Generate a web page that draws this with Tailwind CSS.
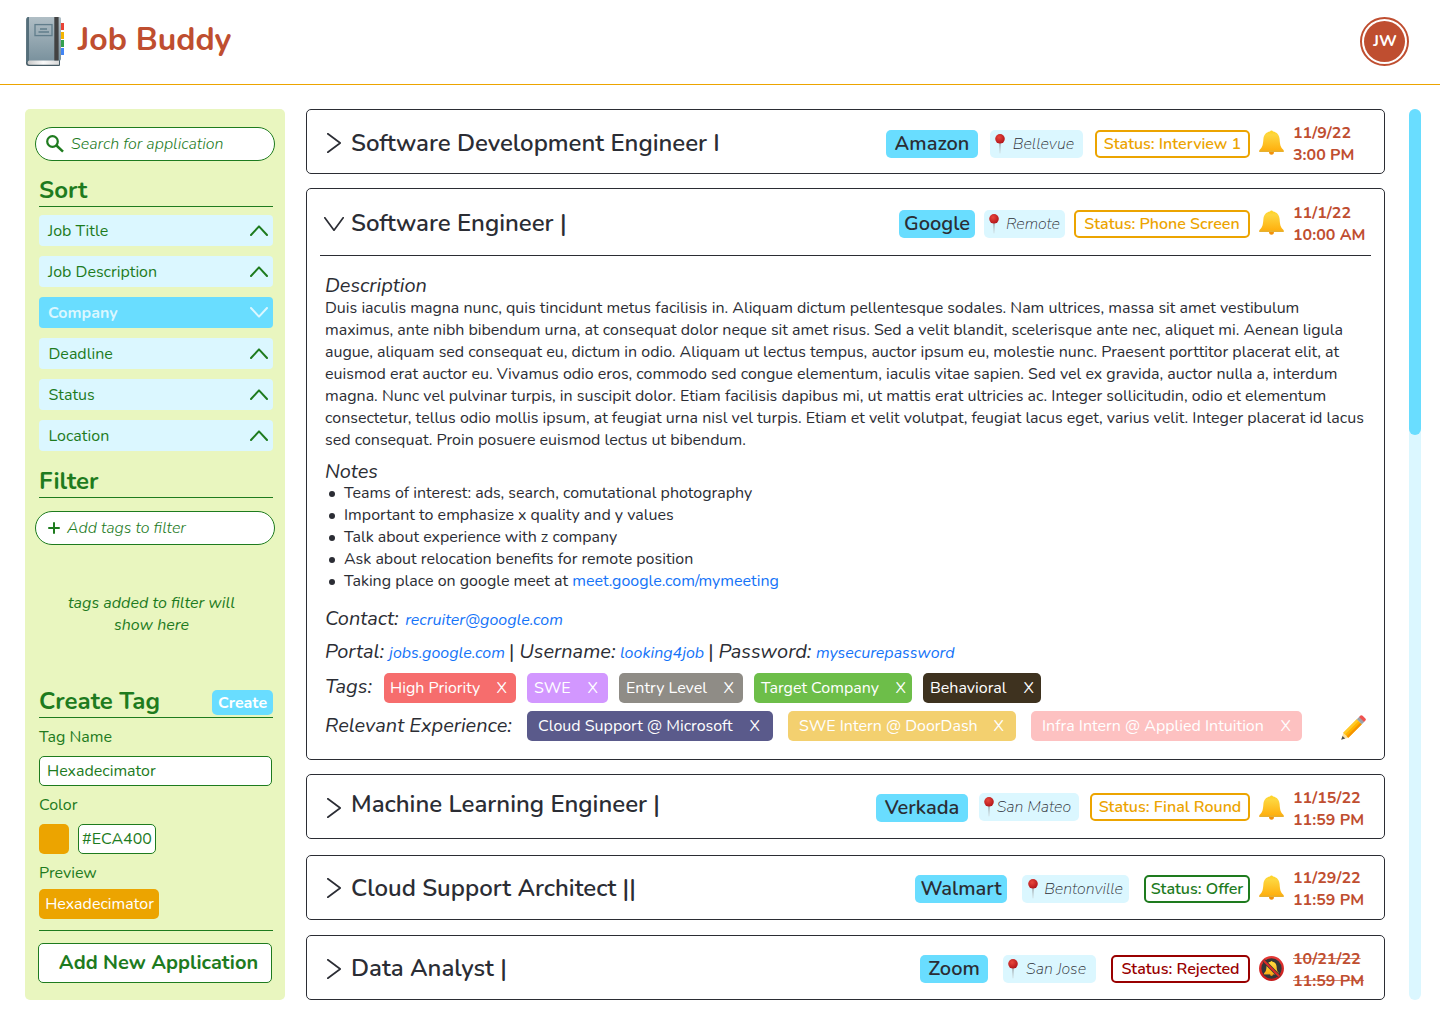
<!DOCTYPE html>
<html lang="en">
<head>
<meta charset="utf-8">
<title>Job Buddy</title>
<script src="https://cdn.jsdelivr.net/npm/@tailwindcss/browser@4"></script>
</head>
<body class="w-[1440px] h-[1024px] overflow-hidden bg-white font-['Nunito','Lato',sans-serif] text-base leading-[22px] text-[#2b2d34]">

<svg class="absolute size-0">
  <symbol id="right" viewBox="0 0 14 20"><path d="M0.8 0.8 L13.2 10 L0.8 19.2" fill="none" stroke="#2b2d34" stroke-width="1.7" stroke-linecap="round" stroke-linejoin="round"/></symbol>
  <symbol id="up" viewBox="0 0 18 11"><path d="M1 10 L9 1.4 L17 10" fill="none" stroke="currentColor" stroke-width="2" stroke-linecap="round" stroke-linejoin="round"/></symbol>
  <linearGradient id="cover" x1="0" y1="0" x2="0" y2="1"><stop offset="0" stop-color="#b0bec5"/><stop offset="1" stop-color="#78909c"/></linearGradient>
  <linearGradient id="pages" x1="0" y1="0" x2="1" y2="0"><stop offset="0" stop-color="#c9c9c9"/><stop offset=".5" stop-color="#fafafa"/><stop offset="1" stop-color="#d8d8d8"/></linearGradient>
  <linearGradient id="gold" x1="0" y1="0" x2="0" y2="1"><stop offset="0" stop-color="#ffd21f"/><stop offset=".2" stop-color="#fdd63f"/><stop offset="1" stop-color="#ffac0a"/></linearGradient>
  <radialGradient id="ball" cx=".4" cy=".35" r=".65"><stop offset="0" stop-color="#e8463c"/><stop offset="1" stop-color="#b3161b"/></radialGradient>
  <linearGradient id="needle" x1="0" y1="0" x2="0" y2="1"><stop offset="0" stop-color="#8a9499"/><stop offset="1" stop-color="#cdd8dc"/></linearGradient>
  <linearGradient id="ring" x1="0" y1="0" x2="0" y2="1"><stop offset="0" stop-color="#e53935"/><stop offset="1" stop-color="#c61a1a"/></linearGradient>
  <symbol id="bell" viewBox="0 0 25 25">
    <path d="M10 21.500 H15 a2.500 3.200 0 0 1 -5 0z" fill="#f29008"/>
    <path d="M11 1.600 a1.600 1.500 0 0 1 3 0 C18 2.300 20.300 5 20.600 9 C21 14.500 21.300 17 24.300 19.800 Q25.200 21.800 24 21.900 H1 Q-0.200 21.800 0.700 19.800 C3.700 17 4 14.500 4.400 9 C4.700 5 7 2.300 11 1.600z" fill="url(#gold)"/>
    <path d="M0.500 20.600 H24.500 Q25 21.900 24 22 H1 Q0 21.900 0.500 20.600z" fill="#e6b030"/>
  </symbol>
  <symbol id="muted" viewBox="0 0 25 25">
    <circle cx="12.500" cy="12.500" r="11.300" fill="#343638" stroke="url(#ring)" stroke-width="2.300"/>
    <svg x="4.800" y="4.200" width="15.500" height="16.500"><use href="#bell"/></svg>
    <path d="M4.600 4.600 L20.400 20.400" stroke="#343638" stroke-width="3.600"/>
    <path d="M4.600 4.600 L20.400 20.400" stroke="#dd2c28" stroke-width="2.100"/>
  </symbol>
  <symbol id="pin" viewBox="0 0 10 20">
    <path d="M4.300 8.500 H5.700 L5.300 19 Q5 20 4.700 19z" fill="url(#needle)"/>
    <circle cx="5" cy="4.800" r="4.800" fill="url(#ball)"/>
  </symbol>
</svg>

<header class="flex h-[85px] items-start border-b border-[#eca400] pl-[26px] pr-[31px] pt-[17px]">
  <svg class="h-[49px] w-[38px]" viewBox="0 0 38 49">
    <rect x="33" y="6" width="5" height="7" fill="#ea4335"/>
    <rect x="33" y="15" width="5" height="7" fill="#f4b400"/>
    <rect x="33" y="23" width="5" height="7" fill="#34a04e"/>
    <rect x="33" y="31" width="5" height="7" fill="#4285f4"/>
    <path d="M2 42 H34 V48 a1 1 0 0 1 -1 1 H3 a3 3 0 0 1 -3 -3 V3 a3 3 0 0 1 2 -2.5z" fill="#455a64"/>
    <path d="M2.500 43 H33 V47.700 H3.500 a2 2 0 0 1 -2 -2z" fill="url(#pages)"/>
    <path d="M2.500 0 H33.500 a1.500 1.500 0 0 1 1.500 1.500 V42 a1.500 1.500 0 0 1 -1.500 1.500 H3 Q1.500 43.500 0.500 45.500 V2 a2 2 0 0 1 2 -2z" fill="url(#cover)"/>
    <path d="M0.500 2 a2 2 0 0 1 2.500 -2 V43.500 Q1.500 43.500 0.500 45.500z" fill="#546e7a"/>
    <rect x="28.300" y="0" width="4.300" height="43.500" fill="#424242"/>
    <rect x="9" y="7.600" width="17" height="11" fill="none" stroke="#607d8b" stroke-width="1.300"/>
    <path d="M14 12 H21 M12.500 15 H23" stroke="#607d8b" stroke-width="1.300"/>
  </svg>
  <h1 class="ml-[14px] mt-px text-[32px] font-bold leading-[44px] text-[#bf4e30]">Job Buddy</h1>
  <div class="ml-auto flex size-[49px] items-center justify-center rounded-full border-2 border-[#bf4e30]">
    <div class="flex size-[41px] items-center justify-center rounded-full bg-[#bf4e30] pb-px pl-px font-bold text-white">JW</div>
  </div>
</header>

<main class="flex pl-[25px] pt-6">
  <aside class="flex h-[891px] w-[260px] shrink-0 flex-col rounded-[5px] bg-[#e9f6bf] pl-[14px] pr-3 pt-[18px] text-[#1e7b1e]">
    <label class="-ml-1 -mr-[2px] flex h-[34px] w-[240px] items-center rounded-full border border-[#1e7b1e] bg-white pl-[10px]">
      <svg class="size-[18px]" viewBox="0 0 18 18" fill="none" stroke="#1e7b1e"><circle cx="6.500" cy="6.500" r="5.300" stroke-width="2.200"/><path d="M10.500 10.500 L17 16.600" stroke-width="2.500"/></svg>
      <span class="ml-[7px] font-light italic">Search for application</span>
    </label>

    <h2 class="mt-3 h-[34px] w-[234px] border-b border-[#1e7b1e] text-2xl font-bold leading-[35px]">Sort</h2>
    <ul class="mt-2 flex w-[234px] flex-col gap-[10px]">
      <li class="flex h-[31px] items-center justify-between rounded-[4px] bg-[#dbf7ff] pl-[9px] pr-[5px]">Job Title<svg class="h-[11px] w-[18px]"><use href="#up"/></svg></li>
      <li class="flex h-[31px] items-center justify-between rounded-[4px] bg-[#dbf7ff] pl-[9px] pr-[5px]">Job Description<svg class="h-[11px] w-[18px]"><use href="#up"/></svg></li>
      <li class="flex h-[31px] items-center justify-between rounded-[4px] bg-[#69ddff] pl-[9px] pr-[5px] font-bold text-[#dbf7ff]">Company<svg class="h-[11px] w-[18px] rotate-180"><use href="#up"/></svg></li>
      <li class="flex h-[31px] items-center justify-between rounded-[4px] bg-[#dbf7ff] pl-[9.500px] pr-[5px]">Deadline<svg class="h-[11px] w-[18px]"><use href="#up"/></svg></li>
      <li class="flex h-[31px] items-center justify-between rounded-[4px] bg-[#dbf7ff] pl-[9.500px] pr-[5px]">Status<svg class="h-[11px] w-[18px]"><use href="#up"/></svg></li>
      <li class="flex h-[31px] items-center justify-between rounded-[4px] bg-[#dbf7ff] pl-[9.500px] pr-[5px]">Location<svg class="h-[11px] w-[18px]"><use href="#up"/></svg></li>
    </ul>

    <h2 class="mt-[13px] h-[34px] w-[234px] border-b border-[#1e7b1e] text-2xl font-bold leading-[35px]">Filter</h2>
    <label class="-ml-1 mt-[13px] flex h-[34px] w-[240px] items-center rounded-full border border-[#1e7b1e] bg-white pl-3">
      <svg class="size-3" viewBox="0 0 12 12" stroke="#1e7b1e" stroke-width="2" stroke-linecap="round"><path d="M6 1V11M1 6H11"/></svg>
      <span class="ml-[7px] font-light italic">Add tags to filter</span>
    </label>
    <p class="ml-[-9px] mt-[47px] w-[243px] text-center italic">tags added to filter will<br>show here</p>

    <div class="mt-12 flex h-[34px] w-[234px] items-start justify-between border-b border-[#1e7b1e]">
      <h2 class="text-2xl font-bold leading-[35px]">Create Tag</h2>
      <button class="mt-[6px] h-[25px] w-[61px] rounded-[5px] bg-[#69ddff] font-bold text-white">Create</button>
    </div>
    <span class="mt-2">Tag Name</span>
    <div class="mt-2 h-[30px] w-[233px] rounded-[5px] border border-[#1e7b1e] bg-white pl-[7px] pt-[3px]">Hexadecimator</div>
    <span class="mt-2">Color</span>
    <div class="mt-2 flex gap-[9px]">
      <div class="size-[30px] rounded-[5px] bg-[#eca400]"></div>
      <div class="h-[30px] w-[78px] rounded-[5px] border border-[#1e7b1e] bg-white pt-[3px] text-center">#ECA400</div>
    </div>
    <span class="mt-2">Preview</span>
    <div class="mt-[5px] flex h-[30px] w-[120px] items-center justify-center rounded-[5px] bg-[#eca400] pl-px text-white">Hexadecimator</div>
    <hr class="mt-[11px] w-[234px] border-[#1e7b1e]">
    <button class="-ml-px mt-3 h-10 w-[234px] rounded-[5px] border border-[#1e7b1e] bg-white pb-[2px] pl-[7px] text-xl font-bold leading-[27px]">Add New Application</button>
  </aside>

  <section class="ml-[21px] flex w-[1079px] flex-col">
    <article class="flex h-[65px] items-start rounded-[5px] border border-[#2b2d34] pl-5">
      <svg class="mt-[23px] h-5 w-[14px]"><use href="#right"/></svg>
      <h3 class="ml-[10px] mt-[17px] text-2xl font-semibold leading-[33px]">Software Development Engineer I</h3>
      <div class="ml-auto mt-5 flex">
        <span class="flex h-7 w-[92px] items-center justify-center rounded-[5px] bg-[#69ddff] text-xl font-semibold">Amazon</span>
        <span class="ml-3 flex h-7 w-[93px] items-center rounded-[5px] bg-[#dbf7ff] pl-[5px] pr-[9px] font-extralight italic"><svg class="-mt-px h-5 w-[10px]"><use href="#pin"/></svg><span class="ml-auto">Bellevue</span></span>
        <span class="ml-3 flex h-7 w-[155px] items-center justify-center rounded-[5px] border-2 border-[#eca400] font-semibold text-[#eca400]">Status: Interview 1</span>
      </div>
      <svg class="ml-[9px] mt-[20px] size-[25px]"><use href="#bell"/></svg>
      <time class="ml-[9px] mt-3 w-[91px] font-bold text-[#bf4e30]">11/9/22<br>3:00 PM</time>
    </article>

    <article class="mt-[14px] flex h-[572px] flex-col rounded-[5px] border border-[#2b2d34]">
      <div class="flex h-[66px] items-start pl-[17px]">
        <svg class="mt-7 h-[14px] w-5" viewBox="0 0 20 14"><path d="M0.800 0.800 L10 13.200 L19.200 0.800" fill="none" stroke="#2b2d34" stroke-width="1.700" stroke-linecap="round" stroke-linejoin="round"/></svg>
        <h3 class="ml-[7px] mt-[18px] text-2xl font-semibold leading-[33px]">Software Engineer |</h3>
        <div class="ml-auto mt-[21px] flex">
          <span class="flex h-7 w-[76px] items-center justify-center rounded-[5px] bg-[#69ddff] text-xl font-semibold">Google</span>
          <span class="ml-[9px] flex h-7 w-[81px] items-center rounded-[5px] bg-[#dbf7ff] pl-[5px] pr-[5px] font-extralight italic"><svg class="-mt-px h-5 w-[10px]"><use href="#pin"/></svg><span class="ml-auto">Remote</span></span>
          <span class="ml-[9px] flex h-7 w-[176px] items-center justify-center rounded-[5px] border-2 border-[#eca400] font-semibold text-[#eca400]">Status: Phone Screen</span>
        </div>
        <svg class="ml-[9px] mt-[21px] size-[25px]"><use href="#bell"/></svg>
        <time class="ml-[9px] mt-[13px] w-[91px] font-bold text-[#bf4e30]">11/1/22<br>10:00 AM</time>
      </div>
      <hr class="mx-[13px] border-[#2b2d34]">
      <div class="flex flex-col whitespace-nowrap pl-[18px] pt-[18px]">
        <h4 class="text-xl italic leading-[23px]">Description</h4>
        <p>Duis iaculis magna nunc, quis tincidunt metus facilisis in. Aliquam dictum pellentesque sodales. Nam ultrices, massa sit amet vestibulum<br>maximus, ante nibh bibendum urna, at consequat dolor neque sit amet risus. Sed a velit blandit, scelerisque ante nec, aliquet mi. Aenean ligula<br>augue, aliquam sed consequat eu, dictum in odio. Aliquam ut lectus tempus, auctor ipsum eu, molestie nunc. Praesent porttitor placerat elit, at<br>euismod erat auctor eu. Vivamus odio eros, commodo sed congue elementum, iaculis vitae sapien. Sed vel ex gravida, auctor nulla a, interdum<br>magna. Nunc vel pulvinar turpis, in suscipit dolor. Etiam facilisis dapibus mi, ut mattis erat ultricies ac. Integer sollicitudin, odio et elementum<br>consectetur, tellus odio mollis ipsum, at feugiat urna nisl vel turpis. Etiam et velit volutpat, feugiat lacus eget, varius velit. Integer placerat id lacus<br>sed consequat. Proin posuere euismod lectus ut bibendum.</p>
        <h4 class="mt-[9px] h-[22px] text-xl italic leading-[24px]">Notes</h4>
        <ul>
          <li class="flex items-center"><i class="ml-1 mr-[9px] mt-[2px] size-[6px] rounded-full bg-[#2b2d34]"></i>Teams of interest: ads, search, comutational photography</li>
          <li class="flex items-center"><i class="ml-1 mr-[9px] mt-[2px] size-[6px] rounded-full bg-[#2b2d34]"></i>Important to emphasize x quality and y values</li>
          <li class="flex items-center"><i class="ml-1 mr-[9px] mt-[2px] size-[6px] rounded-full bg-[#2b2d34]"></i>Talk about experience with z company</li>
          <li class="flex items-center"><i class="ml-1 mr-[9px] mt-[2px] size-[6px] rounded-full bg-[#2b2d34]"></i>Ask about relocation benefits for remote position</li>
          <li class="flex items-center"><i class="ml-1 mr-[9px] mt-[2px] size-[6px] rounded-full bg-[#2b2d34]"></i><span>Taking place on google meet at <a class="text-[#1473f8]">meet.google.com/mymeeting</a></span></li>
        </ul>
        <p class="mt-[13px] flex h-[27px] items-baseline text-xl italic leading-[27px]">Contact:<a class="ml-[6.500px] text-base text-[#1473f8]">recruiter@google.com</a></p>
        <p class="mt-[6px] flex h-[27px] items-baseline text-xl italic leading-[27px]">
          <span>Portal:</span><a class="ml-[5px] text-base text-[#1473f8]">jobs.google.com</a>
          <span class="ml-1 not-italic">|</span><span class="ml-[5px]">Username:</span><a class="ml-[4.500px] text-base text-[#1473f8]">looking4job</a>
          <span class="ml-1 not-italic">|</span><span class="ml-[5px]">Password:</span><a class="ml-[4.500px] text-base text-[#1473f8]">mysecurepassword</a>
        </p>
        <div class="mt-2 flex h-[30px] text-white">
          <span class="w-[59px] text-xl italic leading-[27px] text-[#2b2d34]">Tags:</span>
          <div class="flex gap-[11px]">
            <span class="flex w-[132px] items-center justify-between rounded-[5px] bg-[#f66d6d] pl-[6px] pr-[9px]">High Priority<b class="font-normal">X</b></span>
            <span class="flex w-[81px] items-center justify-between rounded-[5px] bg-[#d297ff] pl-[7px] pr-[10px]">SWE<b class="font-normal">X</b></span>
            <span class="flex w-[124px] items-center justify-between rounded-[5px] bg-[#8f8c86] pl-[7px] pr-[9px]">Entry Level<b class="font-normal">X</b></span>
            <span class="flex w-[158px] items-center justify-between rounded-[5px] bg-[#6dbe49] pl-[7px] pr-[6px]">Target Company<b class="font-normal">X</b></span>
            <span class="flex w-[118px] items-center justify-between rounded-[5px] bg-[#3e321f] pl-[7px] pr-[7px]">Behavioral<b class="font-normal">X</b></span>
          </div>
        </div>
        <div class="mt-2 flex h-[30px] text-white">
          <span class="w-[202px] text-xl italic leading-[30px] text-[#2b2d34]">Relevant Experience:</span>
          <div class="flex gap-[15px]">
            <span class="flex w-[246px] items-center justify-between rounded-[5px] bg-[#5a5a8b] pl-[11px] pr-[13px]">Cloud Support @ Microsoft<b class="font-normal">X</b></span>
            <span class="flex w-[228px] items-center justify-between rounded-[5px] bg-[#f3d06f] pl-[11px] pr-[12px]">SWE Intern @ DoorDash<b class="font-normal">X</b></span>
            <span class="flex w-[271px] items-center justify-between rounded-[5px] bg-[#fdc1c1] pl-[11px] pr-[11px]">Infra Intern @ Applied Intuition<b class="font-normal">X</b></span>
          </div>
          <svg class="ml-[39px] mt-1 size-[25px]" viewBox="0 0 25 25">
            <path d="M0.500 24.500 L2.300 17.800 L7.300 22.700z" fill="#fbe0a0"/>
            <path d="M0.200 24.800 L1.500 20.900 L4.200 23.600z" fill="#4e5054"/>
            <path d="M2.300 17.800 L15.800 4.300 L20.800 9.300 L7.300 22.700z" fill="#ffb300"/>
            <path d="M2.300 17.800 L15.800 4.300 L17.500 6 L4 19.500z" fill="#ffca28"/>
            <path d="M5.700 21.200 L19.200 7.700 L20.800 9.300 L7.300 22.700z" fill="#f59300"/>
            <path d="M15.800 4.300 L18.300 1.800 L23.300 6.800 L20.800 9.300z" fill="#9aa2a8"/>
            <path d="M18 2.100 L19.500 0.600 Q20.500 -0.200 21.600 0.700 L24.400 3.500 Q25.300 4.600 24.400 5.600 L23 7.100z" fill="#ef5350"/>
          </svg>
        </div>
      </div>
    </article>

    <article class="mt-[14px] flex h-[65px] items-start rounded-[5px] border border-[#2b2d34] pl-5">
      <svg class="mt-[23px] h-5 w-[14px]"><use href="#right"/></svg>
      <h3 class="ml-[10px] mt-[13px] text-2xl font-semibold leading-[33px]">Machine Learning Engineer |</h3>
      <div class="ml-auto mt-[18px] flex">
        <span class="mt-px flex h-7 w-[92px] items-center justify-center rounded-[5px] bg-[#69ddff] text-xl font-semibold">Verkada</span>
        <span class="ml-[11px] flex h-7 w-[100px] items-center rounded-[5px] bg-[#dbf7ff] pl-[5px] pr-[8px] font-extralight italic"><svg class="-mt-px h-5 w-[10px]"><use href="#pin"/></svg><span class="ml-auto">San Mateo</span></span>
        <span class="ml-[11px] flex h-7 w-[160px] items-center justify-center rounded-[5px] border-2 border-[#eca400] font-semibold text-[#eca400]">Status: Final Round</span>
      </div>
      <svg class="ml-[9px] mt-[20px] size-[25px]"><use href="#bell"/></svg>
      <time class="ml-[9px] mt-3 w-[91px] font-bold text-[#bf4e30]">11/15/22<br>11:59 PM</time>
    </article>

    <article class="mt-4 flex h-[65px] items-start rounded-[5px] border border-[#2b2d34] pl-5">
      <svg class="mt-[22px] h-5 w-[14px]"><use href="#right"/></svg>
      <h3 class="ml-[10px] mt-4 text-2xl font-semibold leading-[33px]">Cloud Support Architect ||</h3>
      <div class="ml-auto mt-[19px] flex">
        <span class="flex h-7 w-[92px] items-center justify-center rounded-[5px] bg-[#69ddff] text-xl font-semibold">Walmart</span>
        <span class="ml-[15px] flex h-7 w-[107px] items-center rounded-[5px] bg-[#dbf7ff] pl-[6px] pr-[6px] font-extralight italic"><svg class="-mt-px h-5 w-[10px]"><use href="#pin"/></svg><span class="ml-auto">Bentonville</span></span>
        <span class="ml-[15px] flex h-7 w-[106px] items-center justify-center rounded-[5px] border-2 border-[#1e7b1e] font-semibold text-[#1e7b1e]">Status: Offer</span>
      </div>
      <svg class="ml-[9px] mt-[19px] size-[25px]"><use href="#bell"/></svg>
      <time class="ml-[9px] mt-[11px] w-[91px] font-bold text-[#bf4e30]">11/29/22<br>11:59 PM</time>
    </article>

    <article class="mt-[15px] flex h-[65px] items-start rounded-[5px] border border-[#2b2d34] pl-5">
      <svg class="mt-[23px] h-5 w-[14px]"><use href="#right"/></svg>
      <h3 class="ml-[10px] mt-4 text-2xl font-semibold leading-[33px]">Data Analyst |</h3>
      <div class="ml-auto mt-[19px] flex">
        <span class="flex h-7 w-[68px] items-center justify-center rounded-[5px] bg-[#69ddff] text-xl font-semibold">Zoom</span>
        <span class="ml-[15px] flex h-7 w-[93px] items-center rounded-[5px] bg-[#dbf7ff] pl-[5px] pr-[10px] font-extralight italic"><svg class="-mt-px h-5 w-[10px]"><use href="#pin"/></svg><span class="ml-auto">San Jose</span></span>
        <span class="ml-[15px] flex h-7 w-[139px] items-center justify-center rounded-[5px] border-2 border-[#990000] font-semibold text-[#990000]">Status: Rejected</span>
      </div>
      <svg class="ml-[9px] mt-[20px] size-[25px]"><use href="#muted"/></svg>
      <time class="ml-[9px] mt-3 w-[91px] font-bold text-[#bf4e30] line-through decoration-[#bf4e30]/70 decoration-1">10/21/22<br>11:59 PM</time>
    </article>
  </section>

  <div class="ml-6 h-[891px] w-3 rounded-full bg-[#dbf7ff]">
    <div class="h-[326px] rounded-full bg-[#69ddff]"></div>
  </div>
</main>
</body>
</html>
